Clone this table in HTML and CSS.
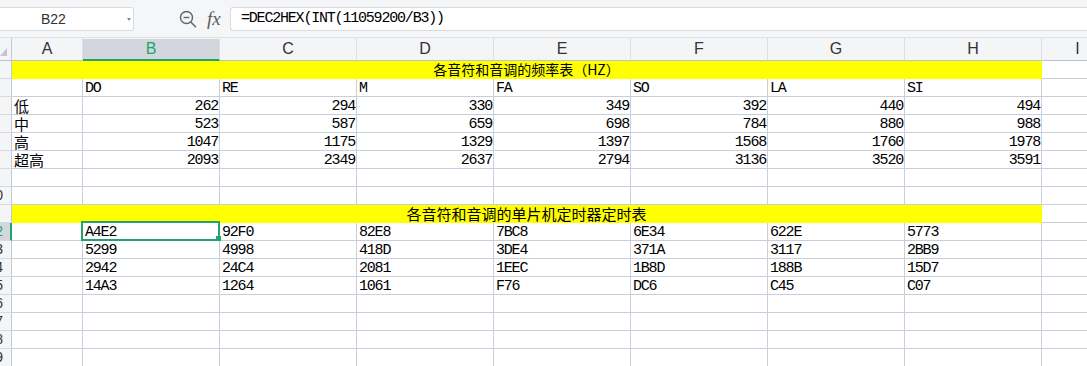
FILE: index.html
```html
<!DOCTYPE html>
<html lang="zh-CN">
<head>
<meta charset="utf-8">
<title>各音符和音调的频率表</title>
<link rel="stylesheet" href="styles.css">
</head>
<body>
<div class="toolbar">
  <div class="namebox"><span class="name">B22</span><span class="caret"></span></div>
  <div class="tools">
    <svg class="zoomicon" width="18" height="19" viewBox="0 0 18 19">
      <circle cx="7.5" cy="7.5" r="6" fill="none" stroke="#5f636a" stroke-width="1.4"/>
      <line x1="4.6" y1="7.5" x2="10.4" y2="7.5" stroke="#5f636a" stroke-width="1.4"/>
      <line x1="11.8" y1="12" x2="16.5" y2="16.8" stroke="#5f636a" stroke-width="1.5" stroke-linecap="round"/>
    </svg>
    <span class="fx">fx</span>
  </div>
  <div class="formula">=DEC2HEX(INT(11059200/B3))</div>
</div>

<div class="sheet">
  <div class="h corner"><svg width="7" height="8" viewBox="0 0 7 8"><polygon points="0,8 7,0 7,8" fill="#c3c6cc"/></svg></div>
  <div class="h">A</div><div class="h sel">B</div><div class="h">C</div><div class="h">D</div><div class="h">E</div><div class="h">F</div><div class="h">G</div><div class="h">H</div><div class="h">I</div>

  <div class="rh hide">13</div><div class="c y t1">各音符和音调的频率表（HZ）</div><div class="c"></div>

  <div class="rh hide">14</div><div class="c"></div><div class="c l">DO</div><div class="c l">RE</div><div class="c l">M</div><div class="c l">FA</div><div class="c l">SO</div><div class="c l">LA</div><div class="c l">SI</div><div class="c"></div>

  <div class="rh hide">15</div><div class="c k">低</div><div class="c r">262</div><div class="c r">294</div><div class="c r">330</div><div class="c r">349</div><div class="c r">392</div><div class="c r">440</div><div class="c r">494</div><div class="c"></div>

  <div class="rh hide">16</div><div class="c k">中</div><div class="c r">523</div><div class="c r">587</div><div class="c r">659</div><div class="c r">698</div><div class="c r">784</div><div class="c r">880</div><div class="c r">988</div><div class="c"></div>

  <div class="rh hide">17</div><div class="c k">高</div><div class="c r">1047</div><div class="c r">1175</div><div class="c r">1329</div><div class="c r">1397</div><div class="c r">1568</div><div class="c r">1760</div><div class="c r">1978</div><div class="c"></div>

  <div class="rh hide">18</div><div class="c k">超高</div><div class="c r">2093</div><div class="c r">2349</div><div class="c r">2637</div><div class="c r">2794</div><div class="c r">3136</div><div class="c r">3520</div><div class="c r">3591</div><div class="c"></div>

  <div class="rh hide">19</div><div class="c"></div><div class="c"></div><div class="c"></div><div class="c"></div><div class="c"></div><div class="c"></div><div class="c"></div><div class="c"></div><div class="c"></div>

  <div class="rh">20</div><div class="c"></div><div class="c"></div><div class="c"></div><div class="c"></div><div class="c"></div><div class="c"></div><div class="c"></div><div class="c"></div><div class="c"></div>

  <div class="rh hide">21</div><div class="c y t2">各音符和音调的单片机定时器定时表</div><div class="c"></div>

  <div class="rh cur">22</div><div class="c"></div><div class="c l selcell">A4E2<span class="selbox"><span class="handle"></span></span></div><div class="c l">92F0</div><div class="c l">82E8</div><div class="c l">7BC8</div><div class="c l">6E34</div><div class="c l">622E</div><div class="c l">5773</div><div class="c"></div>

  <div class="rh">23</div><div class="c"></div><div class="c l">5299</div><div class="c l">4998</div><div class="c l">418D</div><div class="c l">3DE4</div><div class="c l">371A</div><div class="c l">3117</div><div class="c l">2BB9</div><div class="c"></div>

  <div class="rh">24</div><div class="c"></div><div class="c l">2942</div><div class="c l">24C4</div><div class="c l">2081</div><div class="c l">1EEC</div><div class="c l">1B8D</div><div class="c l">188B</div><div class="c l">15D7</div><div class="c"></div>

  <div class="rh">25</div><div class="c"></div><div class="c l">14A3</div><div class="c l">1264</div><div class="c l">1061</div><div class="c l">F76</div><div class="c l">DC6</div><div class="c l">C45</div><div class="c l">C07</div><div class="c"></div>

  <div class="rh">26</div><div class="c"></div><div class="c"></div><div class="c"></div><div class="c"></div><div class="c"></div><div class="c"></div><div class="c"></div><div class="c"></div><div class="c"></div>

  <div class="rh">27</div><div class="c"></div><div class="c"></div><div class="c"></div><div class="c"></div><div class="c"></div><div class="c"></div><div class="c"></div><div class="c"></div><div class="c"></div>

  <div class="rh">28</div><div class="c"></div><div class="c"></div><div class="c"></div><div class="c"></div><div class="c"></div><div class="c"></div><div class="c"></div><div class="c"></div><div class="c"></div>

  <div class="rh">29</div><div class="c"></div><div class="c"></div><div class="c"></div><div class="c"></div><div class="c"></div><div class="c"></div><div class="c"></div><div class="c"></div><div class="c"></div>
</div>
</body>
</html>
```

FILE: styles.css
```css
* {
  box-sizing: border-box;
}

html,
body {
  margin: 0;
  padding: 0;
}

body {
  width: 1087px;
  height: 366px;
  overflow: hidden;
  background: #ffffff;
  color: #000000;
  font-family: "Liberation Sans", Arial, sans-serif;
}

/* ---------- formula toolbar ---------- */
.toolbar {
  display: flex;
  align-items: flex-start;
  height: 38px;
  padding-top: 7px;
  background: #f5f6f8;
  border-bottom: 1px solid #e0e2e6;
}

.namebox {
  display: flex;
  align-items: center;
  width: 134px;
  height: 24px;
  background: #ffffff;
  border: 1px solid #d8dbe0;
  border-left: none;
  border-radius: 0 3px 3px 0;
}

.namebox .name {
  flex: 1;
  padding-left: 41px;
  font-size: 14px;
  color: #333333;
}

.caret {
  width: 0;
  height: 0;
  margin-right: 2px;
  border-left: 2.5px solid transparent;
  border-right: 2.5px solid transparent;
  border-top: 3px solid #85888e;
}

.tools {
  display: flex;
  align-items: center;
  width: 96px;
  height: 24px;
  padding-left: 45px;
  gap: 10px;
}

.zoomicon {
  display: block;
}

.fx {
  font-family: "Liberation Serif", serif;
  font-style: italic;
  font-size: 19px;
  line-height: 20px;
  color: #595d64;
}

.formula {
  flex: 1;
  height: 24px;
  padding-left: 10px;
  background: #ffffff;
  border: 1px solid #d8dbe0;
  border-right: none;
  border-radius: 3px 0 0 3px;
  font-family: "Liberation Mono", monospace;
  font-size: 15px;
  letter-spacing: -1.2px;
  line-height: 22px;
  white-space: nowrap;
  color: #000000;
}

/* ---------- sheet grid ---------- */
.sheet {
  display: grid;
  grid-template-columns: 12px 71px repeat(7, 137px) 72px;
  grid-template-rows: 23px;
  grid-auto-rows: 18px;
  width: 1114px;
}

.h {
  background: #f4f5f7;
  border-right: 1px solid #dcdfe4;
  border-bottom: 1px solid #bcc2cc;
  text-align: center;
  font-size: 16px;
  line-height: 22px;
  color: #333333;
}

.h.sel {
  background: #d3d6dd;
  border-top: 1px solid #f4f5f7;
  border-bottom: 2px solid #1fa56e;
  line-height: 20px;
  color: #1fa56e;
}

.h.corner {
  display: flex;
  align-items: flex-end;
  justify-content: flex-end;
  padding: 0 4px 4px 0;
  border-right-color: #c3c9d4;
}

.h.corner svg {
  display: block;
}

.rh {
  display: flex;
  justify-content: flex-end;
  padding-right: 8px;
  overflow: hidden;
  background: #f4f5f7;
  border-right: 1px solid #c3c9d4;
  border-bottom: 1px solid #d5d9e0;
  font-size: 14px;
  line-height: 17px;
  white-space: nowrap;
  color: #333333;
}

.rh.hide {
  padding-right: 11px;
}

.rh.cur {
  padding-right: 7px;
  background: #d3d6dd;
  border-right: 2px solid #1fa56e;
  color: #1fa56e;
}

.c {
  border-right: 1px solid #c8cedb;
  border-bottom: 1px solid #c8cedb;
  white-space: nowrap;
}

.l,
.r {
  padding-top: 2px;
  font-family: "Liberation Mono", monospace;
  font-size: 15px;
  letter-spacing: -1.2px;
  line-height: 16px;
}

.l {
  padding-left: 2px;
}

.r {
  padding-right: 1px;
  text-align: right;
}

.k {
  padding-left: 2px;
  font-family: "Noto Sans CJK SC", sans-serif;
  font-size: 15px;
  line-height: 17px;
}

.y {
  grid-column: span 8;
  background: #ffff00;
  border-right-color: #ffff00;
  border-bottom-color: #ffff00;
  text-align: center;
  font-family: "Noto Sans CJK SC", sans-serif;
  line-height: 17px;
}

.t1 {
  font-size: 14px;
}

.t2 {
  font-size: 15px;
}

/* ---------- active cell ---------- */
.selcell {
  position: relative;
}

.selbox {
  position: absolute;
  top: -2px;
  left: -2px;
  right: -1px;
  bottom: -1px;
  z-index: 2;
  border: 2px solid #1fa56e;
}

.handle {
  position: absolute;
  right: -3px;
  bottom: -2px;
  width: 5px;
  height: 5px;
  background: #1fa56e;
}
```
